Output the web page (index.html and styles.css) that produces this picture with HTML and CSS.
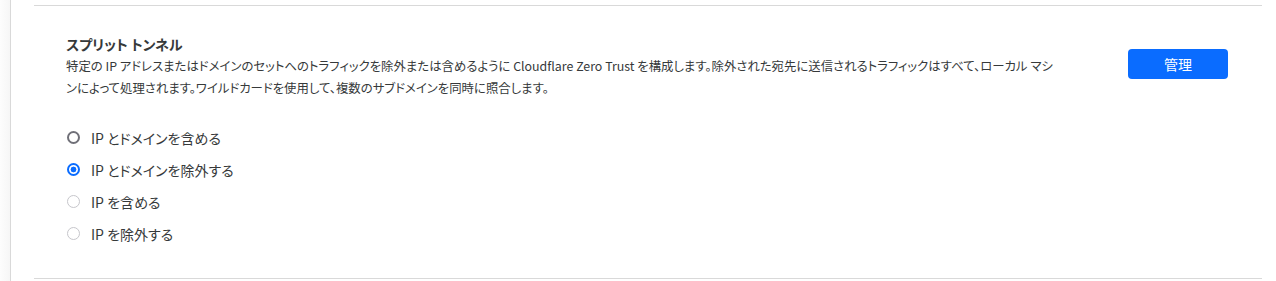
FILE: index.html
```html
<!DOCTYPE html>
<html lang="ja">
<head>
<meta charset="utf-8">
<link rel="stylesheet" href="styles.css">
</head>
<body>
<div class="layout">
  <div class="rail"></div>
  <main class="main">
    <section class="setting">
      <div class="setting-head">
        <div class="setting-text">
          <h2 class="title">スプリット トンネル</h2>
          <p class="desc">特定の IP アドレスまたはドメインのセットへのトラフィックを除外または含めるように Cloudflare Zero Trust を構成します。除外された宛先に送信されるトラフィックはすべて、ローカル マシンによって処理されます。ワイルドカードを使用して、複数のサブドメインを同時に照合します。</p>
        </div>
        <button class="btn">管理</button>
      </div>
      <div class="radios">
        <label class="radio"><span class="dot dot-dark"></span>IP とドメインを含める</label>
        <label class="radio"><span class="dot dot-on"></span>IP とドメインを除外する</label>
        <label class="radio"><span class="dot"></span>IP を含める</label>
        <label class="radio"><span class="dot"></span>IP を除外する</label>
      </div>
    </section>
  </main>
</div>
</body>
</html>
```
FILE: styles.css
```css
* { box-sizing: border-box; }
html, body { margin: 0; padding: 0; background: #fff; }
body {
  font-family: "Noto Sans CJK JP", "Noto Sans", sans-serif;
  font-feature-settings: "palt";
  color: #36393a;
  width: 1276px;
  height: 281px;
  overflow: hidden;
}
.layout { display: flex; height: 281px; }
.rail {
  width: 11px;
  flex: none;
  background: linear-gradient(to right, #fdfdfd, #f6f6f6);
  border-right: 1px solid #d9d9d9;
}
.main { flex: 1; padding: 5px 14px 0 23px; }
.setting {
  border-top: 1px solid #d9d9d9;
  border-bottom: 1px solid #d9d9d9;
  height: 274px;
  padding: 27px 0 0 32px;
}
.setting-head { display: flex; align-items: flex-start; }
.setting-text { width: 995px; }
.title {
  margin: 0;
  font-size: 14px;
  font-weight: 700;
  line-height: 22px;
  color: #36393a;
}
.desc {
  margin: 0;
  font-size: 12.4px;
  line-height: 22px;
  color: #36393a;
}
.btn {
  margin: 16px 0 0 67px;
  width: 100px;
  height: 30px;
  border: none;
  border-radius: 4px;
  background: #0a6cff;
  color: #fff;
  font-family: "Noto Sans CJK JP", sans-serif;
  font-size: 14px;
}
.radios {
  margin-top: 28px;
  display: flex;
  flex-direction: column;
  gap: 11px;
}
.radio {
  display: flex;
  align-items: center;
  height: 21px;
  font-size: 14px;
  color: #36393a;
}
.dot {
  width: 13px;
  height: 13px;
  border-radius: 50%;
  border: 1.5px solid #c6c6cb;
  margin: 0 11px 0 1px;
  flex: none;
}
.dot-dark { border: 2px solid #707078; }
.dot-on {
  border: 2px solid #0a6cff;
  background: radial-gradient(circle, #0a6cff 0 2.6px, #fff 3.2px);
}
```
